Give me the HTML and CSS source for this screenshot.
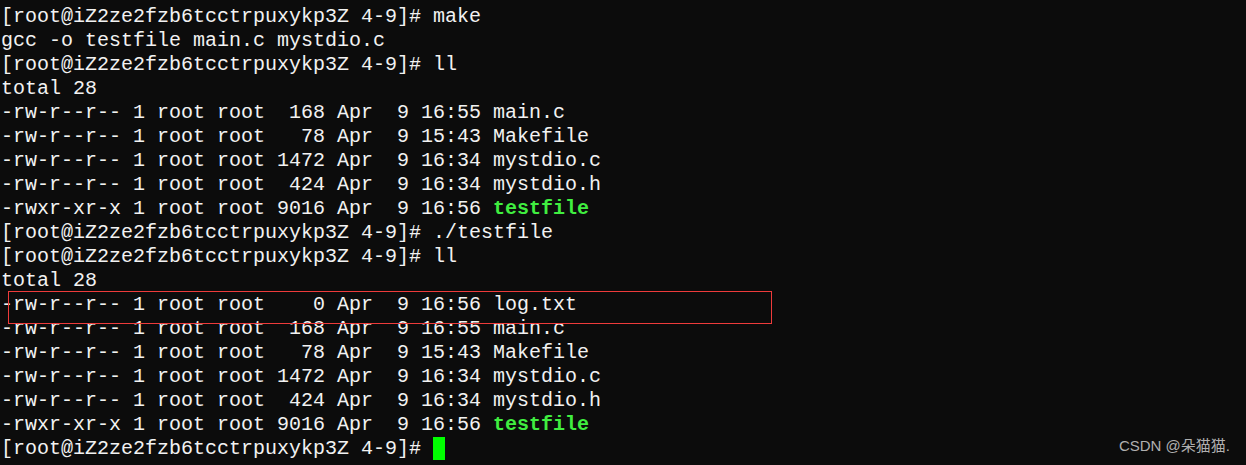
FILE: index.html
```html
<!DOCTYPE html>
<html>
<head>
<meta charset="utf-8">
<link rel="stylesheet" href="styles.css">
</head>
<body>
<div class="term">
<pre class="out">[root@iZ2ze2fzb6tcctrpuxykp3Z 4-9]# make
gcc -o testfile main.c mystdio.c
[root@iZ2ze2fzb6tcctrpuxykp3Z 4-9]# ll
total 28
-rw-r--r-- 1 root root  168 Apr  9 16:55 main.c
-rw-r--r-- 1 root root   78 Apr  9 15:43 Makefile
-rw-r--r-- 1 root root 1472 Apr  9 16:34 mystdio.c
-rw-r--r-- 1 root root  424 Apr  9 16:34 mystdio.h
-rwxr-xr-x 1 root root 9016 Apr  9 16:56 <span class="exe">testfile</span>
[root@iZ2ze2fzb6tcctrpuxykp3Z 4-9]# ./testfile
[root@iZ2ze2fzb6tcctrpuxykp3Z 4-9]# ll
total 28
-rw-r--r-- 1 root root    0 Apr  9 16:56 log.txt
-rw-r--r-- 1 root root  168 Apr  9 16:55 main.c
-rw-r--r-- 1 root root   78 Apr  9 15:43 Makefile
-rw-r--r-- 1 root root 1472 Apr  9 16:34 mystdio.c
-rw-r--r-- 1 root root  424 Apr  9 16:34 mystdio.h
-rwxr-xr-x 1 root root 9016 Apr  9 16:56 <span class="exe">testfile</span>
[root@iZ2ze2fzb6tcctrpuxykp3Z 4-9]# <span class="cursor"></span></pre>
<div class="highlight"></div>
<div class="mark">CSDN @朵猫猫.</div>
</div>
</body>
</html>
```
FILE: styles.css
```css
html, body {
  margin: 0;
  padding: 0;
  background: #0c0c0c;
}
.term {
  position: relative;
  width: 1246px;
  height: 465px;
  overflow: hidden;
  background: #0c0c0c;
}
.out {
  margin: 0;
  padding: 5px 0 0 1px;
  font-family: "Liberation Mono", "DejaVu Sans Mono", monospace;
  font-size: 20px;
  line-height: 24px;
  color: #f2f2f2;
  white-space: pre;
}
.exe {
  color: #40ee40;
  font-weight: bold;
}
.cursor {
  display: inline-block;
  width: 12px;
  height: 23px;
  background: #00ff00;
  vertical-align: -6px;
}
.highlight {
  position: absolute;
  left: 8px;
  top: 291px;
  width: 762px;
  height: 31px;
  border: 1px solid #ee3b3b;
}
.mark {
  position: absolute;
  right: 16px;
  top: 437px;
  font-family: "Liberation Sans", "Noto Sans CJK SC", sans-serif;
  font-size: 15px;
  line-height: 18px;
  color: #b0b0b0;
}
```
